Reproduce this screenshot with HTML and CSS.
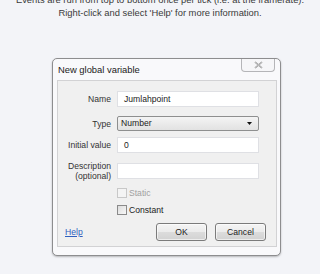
FILE: index.html
```html
<!DOCTYPE html>
<html>
<head>
<meta charset="utf-8">
<link rel="stylesheet" href="styles.css">
</head>
<body>
<div class="intro">
  <p>Events are run from top to bottom once per tick (i.e. at the framerate).</p>
  <p>Right-click and select 'Help' for more information.</p>
</div>
<div class="dialog">
  <div class="titlebar">
    <span class="title">New global variable</span>
    <span class="close"><svg width="9" height="8" viewBox="0 0 9 8"><path d="M1 1 L8 7 M8 1 L1 7" stroke="#8a8a8a" stroke-width="1.6" fill="none"/><path d="M1 1 L8 7 M8 1 L1 7" stroke="#f4f4f4" stroke-width="0.5" fill="none"/></svg></span>
  </div>
  <div class="panel">
    <div class="row r-name">
      <label class="lbl">Name</label>
      <div class="field">Jumlahpoint</div>
    </div>
    <div class="row r-type">
      <label class="lbl">Type</label>
      <div class="select"><span>Number</span><svg width="5" height="3" viewBox="0 0 5 3"><path d="M0 0 H5 L2.5 3 Z" fill="#111"/></svg></div>
    </div>
    <div class="row r-init">
      <label class="lbl">Initial value</label>
      <div class="field">0</div>
    </div>
    <div class="row r-desc">
      <label class="lbl">Description<br>(optional)</label>
      <div class="field"></div>
    </div>
    <div class="checks">
      <div class="check disabled"><span class="box"></span>Static</div>
      <div class="check"><span class="box"></span>Constant</div>
    </div>
    <div class="footer">
      <a class="help">Help</a>
      <div class="buttons">
        <span class="btn">OK</span>
        <span class="btn">Cancel</span>
      </div>
    </div>
  </div>
</div>
</body>
</html>
```
FILE: styles.css
```css
* { box-sizing: border-box; }
html, body { margin: 0; padding: 0; }
body {
  background: #f3f4f8;
  width: 320px;
  height: 274px;
  overflow: hidden;
  font-family: "Liberation Sans", Arial, sans-serif;
  color: #333;
}
.intro {
  text-align: center;
  font-size: 9.4px;
  line-height: 13px;
  margin-top: -7px;
  color: #3a3a3a;
}
.intro p { margin: 0; }
.dialog {
  margin: 39px 0 0 52px;
  width: 229px;
  height: 198px;
  background: #f9f9fb;
  border: 1px solid #8d8d8f;
  border-radius: 5px;
  box-shadow: 0 1px 2px rgba(0,0,0,0.25);
  padding: 0 3px 8px 4px;
  display: flex;
  flex-direction: column;
}
.titlebar {
  height: 21px;
  display: flex;
  align-items: flex-start;
  justify-content: space-between;
}
.title {
  font-size: 9.4px;
  color: #222;
  margin-top: 5px;
  padding-left: 1px;
}
.close {
  width: 34px;
  height: 13px;
  margin-right: 2px;
  border: 1px solid #b5b5b8;
  border-top: none;
  border-radius: 0 0 4px 4px;
  background: #f6f6f8;
  display: flex;
  align-items: center;
  justify-content: center;
}
.panel {
  flex: 1;
  background: #f0f0f0;
  border: 1px solid #d2d2d4;
  padding: 10px 0 0 0;
  display: flex;
  flex-direction: column;
  font-size: 8.6px;
}
.row {
  display: flex;
  align-items: center;
  gap: 6px;
  height: 16px;
}
.r-type { margin-top: 9px; height: 15px; }
.r-init { margin-top: 6px; }
.r-desc { margin-top: 10px; }
.lbl {
  width: 53px;
  text-align: right;
  color: #333;
  line-height: 10px;
  flex: none;
}
.field {
  width: 142px;
  height: 16px;
  background: #fff;
  border: 1px solid #dfe0e4;
  padding: 0 0 0 6px;
  line-height: 14px;
  color: #222;
}
.select {
  width: 142px;
  height: 15px;
  background: linear-gradient(#f4f4f4, #e2e2e2);
  border: 1px solid #8e8f8f;
  border-radius: 2px;
  padding: 0 6px 0 3px;
  line-height: 13px;
  color: #222;
  display: flex;
  align-items: center;
  justify-content: space-between;
}
.checks {
  margin-top: 8px;
  padding-left: 59px;
  display: flex;
  flex-direction: column;
  gap: 6px;
}
.check {
  display: flex;
  align-items: center;
  height: 11px;
  color: #222;
}
.check .box {
  width: 10px;
  height: 10px;
  border: 1px solid #8a8a8a;
  background: linear-gradient(135deg, #dcdcdc, #f8f8f8);
  margin-right: 2px;
}
.check.disabled { color: #a0a0a0; }
.check.disabled .box { border-color: #c8c8c8; background: #f4f4f4; }
.footer {
  margin-top: 8px;
  display: flex;
  justify-content: space-between;
  align-items: flex-start;
  padding: 0 10px 0 7px;
}
.help {
  color: #2f5fbf;
  text-decoration: underline;
  margin-top: 4px;
}
.buttons { display: flex; gap: 8px; }
.btn {
  width: 51px;
  height: 18px;
  border: 1px solid #7b7b7b;
  border-radius: 3px;
  background: linear-gradient(#f5f5f5 0%, #ebebeb 50%, #dcdcdc 51%, #d2d2d2 100%);
  color: #222;
  display: flex;
  align-items: center;
  justify-content: center;
  box-shadow: inset 0 0 0 1px rgba(255,255,255,0.6);
}
```
